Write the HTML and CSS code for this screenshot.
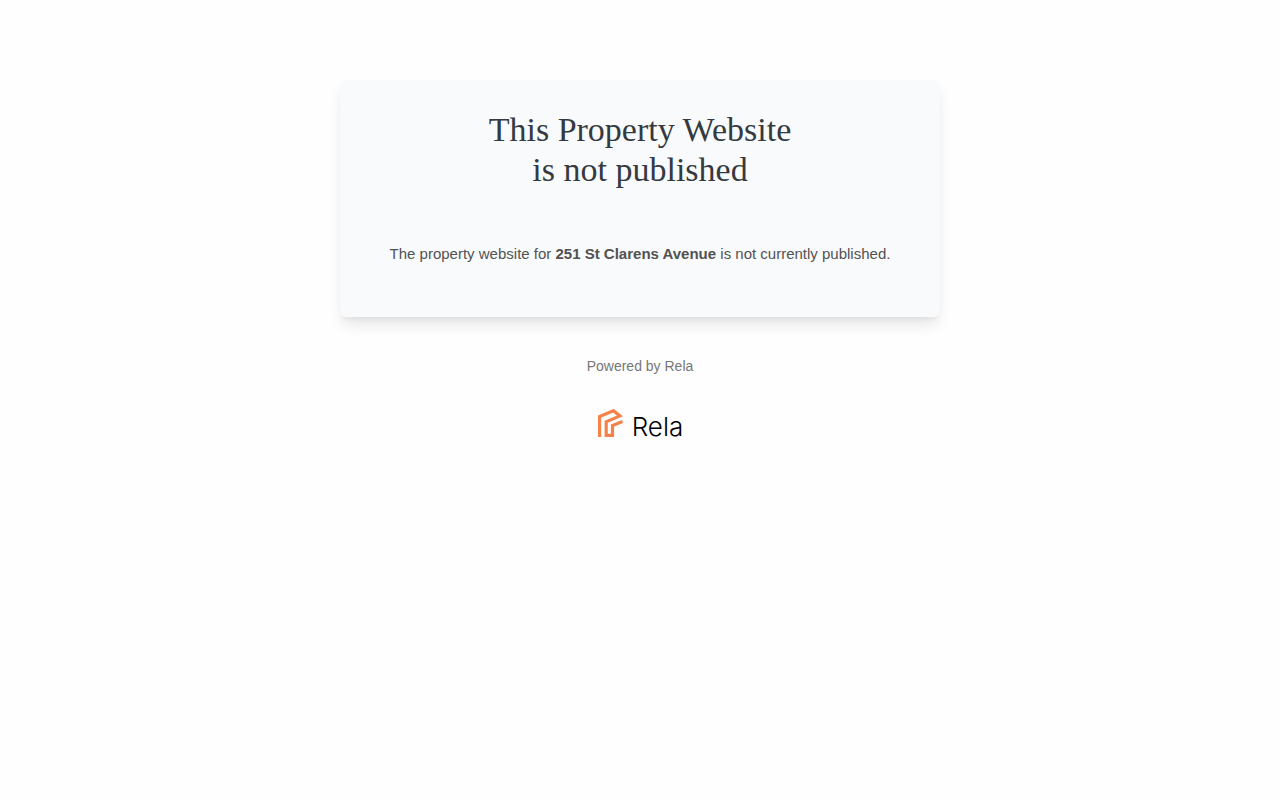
FILE: index.html
```html
<!DOCTYPE html>
<html lang="en">

<head>
    <meta charset="UTF-8">
    <meta name="viewport" content="width=device-width, initial-scale=1.0">
    <title>Property Website</title>
    <link rel="stylesheet" href="styles.css">
</head>

<body>

    <main class="card">
        <h1>This Property Website<br>is not published</h1>
        <p>The property website for <strong>251 St Clarens Avenue</strong> is not currently published.</p>
    </main>

    <footer class="footer">
        <p>Powered by Rela</p>
        <div class="logo">
            <svg class="logo-mark" viewBox="0 0 26 28" width="26" height="28" aria-hidden="true">
                <path d="M2.600 28V7.600L16.500 1.700L23 6.900L9.200 12.700V26.400H15.500V16.500L25.500 12.500" fill="none" stroke="#f5824a" stroke-width="3.200"/>
            </svg>
            <span>Rela</span>
        </div>
    </footer>

</body>
</html>
```

FILE: styles.css
```css
body {
    font-family: "Liberation Sans", Arial, sans-serif;
    background-color: #fefefe;
    margin: 0;
    padding: 80px 20px 20px;
    text-align: center;
}

.card {
    box-sizing: border-box;
    max-width: 600px;
    margin: 0 auto;
    padding: 30px 40px 50px;
    background: #f9fafc;
    border-radius: 6px;
    box-shadow: 0 10px 15px -3px rgba(0, 0, 0, 0.1), 0 4px 6px -2px rgba(0, 0, 0, 0.05);
}

.card h1 {
    margin: 0 0 50px;
    font-family: "Liberation Serif", "Times New Roman", serif;
    font-size: 34px;
    font-weight: 400;
    line-height: 40px;
    color: #343a40;
}

.card p {
    margin: 0;
    font-size: 15px;
    line-height: 27px;
    color: #525252;
}

.footer p {
    margin: 38px 0 32px;
    font-size: 14px;
    line-height: 22px;
    color: #777;
}

.logo {
    display: flex;
    justify-content: center;
    gap: 9px;
}

.logo span {
    font-family: Inter, "Open Sans", sans-serif;
    font-size: 26px;
    font-weight: 300;
    line-height: 36px;
    color: #000;
}
```
